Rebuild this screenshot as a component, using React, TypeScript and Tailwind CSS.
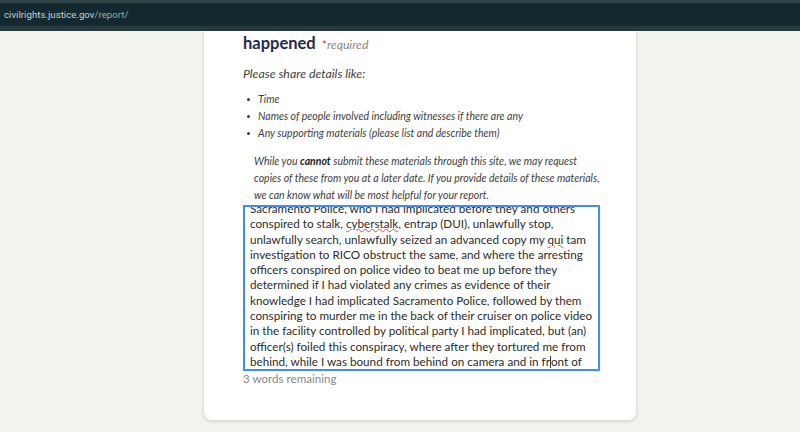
import React from "react"

const sans = { fontFamily: 'Lato, "Noto Sans", sans-serif' }

function Squiggle({ children }: { children: React.ReactNode }) {
  return (
    <span className="underline decoration-wavy decoration-[#e5484d] decoration-1 underline-offset-[0px]">
      {children}
    </span>
  )
}

const Bullet = ({ children }: { children: React.ReactNode }) => (
  <li className="flex items-center h-[17px]">
    <span className="w-[3px] h-[3px] rounded-full bg-[#3d3d3d] ml-[4px] mr-[8px]" />
    <span>{children}</span>
  </li>
)

export default function App() {
  return (
    <div className="w-[800px] h-[432px] overflow-hidden bg-[#f3f3ef] flex flex-col" style={sans}>
      {/* browser url bar */}
      <div className="h-[31px] shrink-0 flex flex-col">
        <div className="h-[3px] bg-[#2e4447]" />
        <div className="h-[23px] bg-[#13292f] flex items-center px-[4px]">
          <span className="text-[9.7px] text-[#c9d3d4] leading-none" style={{ fontFamily: "Roboto, sans-serif" }}>
            civilrights.justice.gov<span className="text-[#9aa9ab]">/report/</span>
          </span>
        </div>
        <div className="flex-1 bg-[#26393c]" />
      </div>

      {/* page */}
      <div className="flex-1 flex justify-center pl-[40px]">
        <div className="w-[432px] h-[389px] bg-white rounded-b-[8px] shadow-[0_1px_4px_rgba(0,0,0,0.18)] pl-[39px] pr-[38px]">
          <div className="flex items-baseline gap-[6px] h-[24px]">
            <h2 className="text-[16.5px] font-bold text-[#1b2b4f] leading-[24px]">happened</h2>
            <span className="text-[12.2px] italic text-[#888]">
              <span className="text-[#d83933] not-italic">*</span>required
            </span>
          </div>

          <p className="mt-[10px] text-[12.3px] italic text-[#3d3d3d] leading-[18px]">Please share details like:</p>

          <ul className="mt-[8px] text-[10.5px] italic text-[#3d3d3d]">
            <Bullet>Time</Bullet>
            <Bullet>Names of people involved including witnesses if there are any</Bullet>
            <Bullet>Any supporting materials (please list and describe them)</Bullet>
          </ul>

          <div className="mt-[11px] ml-[11px] text-[10.5px] italic text-[#3d3d3d] leading-[17px] whitespace-nowrap">
            <div className="h-[17px]">
              While you <b className="text-[#1b1b1b]">cannot</b> submit these materials through this site, we may
              request
            </div>
            <div className="h-[17px]">
              copies of these from you at a later date. If you provide details of these materials,
            </div>
            <div className="h-[17px]">we can know what will be most helpful for your report.</div>
          </div>

          <div className="mt-[1px] w-[357px] h-[166px] border-2 border-[#3e8ef7] overflow-hidden pl-[5px]">
            <div className="-mt-[6px] text-[11.7px] text-[#2c2c2c] leading-[15.3px] whitespace-nowrap">
              <div>Sacramento Police, who I had implicated before they and others</div>
              <div>
                conspired to stalk, <Squiggle>cyberstalk</Squiggle>, entrap (DUI), unlawfully stop,
              </div>
              <div>
                unlawfully search, unlawfully seized an advanced copy my <Squiggle>qui</Squiggle> tam
              </div>
              <div>investigation to RICO obstruct the same, and where the arresting</div>
              <div>officers conspired on police video to beat me up before they</div>
              <div>determined if I had violated any crimes as evidence of their</div>
              <div>knowledge I had implicated Sacramento Police, followed by them</div>
              <div>conspiring to murder me in the back of their cruiser on police video</div>
              <div>in the facility controlled by political party I had implicated, but (an)</div>
              <div>officer(s) foiled this conspiracy, where after they tortured me from</div>
              <div>
                behind, while I was bound from behind on camera and in fr
                <span className="inline-block w-px h-[12px] bg-[#333] align-[-2px]" />
                ont of
              </div>
            </div>
          </div>

          <p className="mt-[1px] text-[11.6px] text-[#8a8a8a] leading-[13px]">3 words remaining</p>
        </div>
      </div>
    </div>
  )
}
